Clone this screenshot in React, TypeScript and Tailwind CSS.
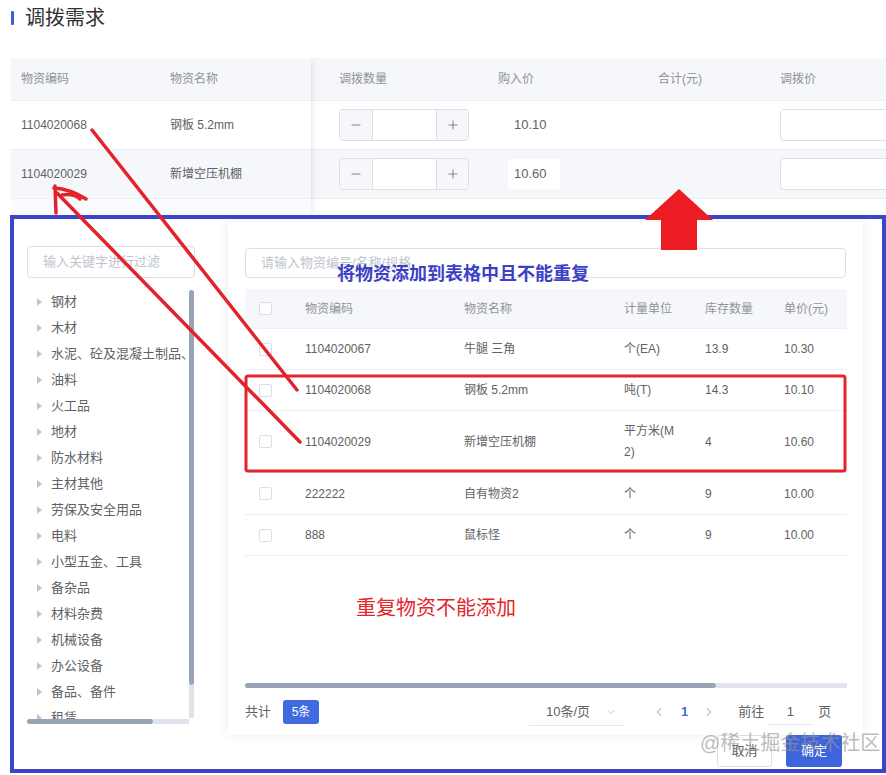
import React from 'react';
import { ChevronDown, ChevronLeft, ChevronRight, Minus, Plus } from 'lucide-react';

const tree = [
  '钢材',
  '木材',
  '水泥、砼及混凝土制品、其他',
  '油料',
  '火工品',
  '地材',
  '防水材料',
  '主材其他',
  '劳保及安全用品',
  '电料',
  '小型五金、工具',
  '备杂品',
  '材料杂费',
  '机械设备',
  '办公设备',
  '备品、备件',
  '租赁',
];

type Row = { code: string; name: string; unit: React.ReactNode; stock: string; price: string; h: string };

const rows: Row[] = [
  { code: '1104020067', name: '牛腿 三角', unit: '个(EA)', stock: '13.9', price: '10.30', h: 'h-[41px]' },
  { code: '1104020068', name: '钢板 5.2mm', unit: '吨(T)', stock: '14.3', price: '10.10', h: 'h-[41px]' },
  {
    code: '1104020029',
    name: '新增空压机棚',
    unit: (
      <span className="leading-[21px]">
        平方米(M
        <br />
        2)
      </span>
    ),
    stock: '4',
    price: '10.60',
    h: 'h-[62px]',
  },
  { code: '222222', name: '自有物资2', unit: '个', stock: '9', price: '10.00', h: 'h-[42px]' },
  { code: '888', name: '鼠标怪', unit: '个', stock: '9', price: '10.00', h: 'h-[41px]' },
];

function InputNumber() {
  return (
    <div className="flex h-[32px] w-[130px] overflow-hidden rounded-[4px] border border-[#dcdfe6] bg-white">
      <div className="flex w-[33px] items-center justify-center border-r border-[#dcdfe6] bg-[#f5f7fa] text-[#606266]">
        <Minus size={14} strokeWidth={1.3} />
      </div>
      <div className="flex-1" />
      <div className="flex w-[32px] items-center justify-center border-l border-[#dcdfe6] bg-[#f5f7fa] text-[#606266]">
        <Plus size={14} strokeWidth={1.3} />
      </div>
    </div>
  );
}

function Checkbox() {
  return <div className="h-[13px] w-[13px] rounded-[2px] border border-[#dcdfe6] bg-white" />;
}

export default function App() {
  return (
    <div className="relative h-[775px] w-[886px] overflow-hidden bg-white font-['Liberation_Sans','Noto_Sans_CJK_SC',sans-serif] text-[12px] text-[#606266]">
      {/* Title */}
      <div className="flex h-[58px] items-start pl-[11px] pt-[4px]">
        <div className="flex h-[28px] items-center">
          <div className="h-[14px] w-[3px] rounded-[1px] bg-[#3a62d7]" />
          <div className="ml-[11px] text-[20px] leading-[28px] text-[#303133]">调拨需求</div>
        </div>
      </div>

      {/* Top table */}
      <div className="ml-[11px] flex h-[157px] w-[875px] overflow-hidden">
        <div className="relative z-10 w-[300px] shrink-0 bg-white shadow-[3px_0_6px_-2px_rgba(0,0,0,0.1)]">
          <div className="flex h-[43px] items-center border-b border-[#ebeef5] bg-[#f5f7fa] text-[#909399]">
            <div className="w-[149px] pl-[10px]">物资编码</div>
            <div className="w-[151px] pl-[10px]">物资名称</div>
          </div>
          <div className="flex h-[49px] items-center border-b border-[#ebeef5] bg-white">
            <div className="w-[149px] pl-[10px]">1104020068</div>
            <div className="w-[151px] pl-[10px]">钢板 5.2mm</div>
          </div>
          <div className="flex h-[49px] items-center border-b border-[#ebeef5] bg-[#f5f7fa]">
            <div className="w-[149px] pl-[10px]">1104020029</div>
            <div className="w-[151px] pl-[10px]">新增空压机棚</div>
          </div>
          <div className="h-[16px] bg-[#fafbfc]" />
        </div>
        <div className="flex-1 overflow-hidden">
          <div className="flex h-[43px] items-center border-b border-[#ebeef5] bg-[#f5f7fa] text-[#909399]">
            <div className="w-[177px] shrink-0 pl-[28px]">调拨数量</div>
            <div className="w-[160px] shrink-0 pl-[10px]">购入价</div>
            <div className="w-[122px] shrink-0 pl-[10px]">合计(元)</div>
            <div className="flex-1 pl-[10px]">调拨价</div>
          </div>
          {[0, 1].map((i) => (
            <div
              key={i}
              className={`flex h-[49px] items-center border-b border-[#ebeef5] ${i === 1 ? 'bg-[#f5f7fa]' : 'bg-white'}`}
            >
              <div className="w-[177px] shrink-0 pl-[28px]">
                <InputNumber />
              </div>
              <div className="w-[160px] shrink-0 pl-[20px]">
                <div className="flex h-[30px] w-[52px] items-center bg-white px-[6px] text-[13px]">
                  {i === 0 ? '10.10' : '10.60'}
                </div>
              </div>
              <div className="w-[122px] shrink-0" />
              <div className="flex-1 pl-[10px]">
                <div className="h-[32px] w-[140px] rounded-[4px] border border-[#dcdfe6] bg-white" />
              </div>
            </div>
          ))}
        </div>
      </div>

      {/* Dialog (outlined) */}
      <div className="ml-[10px] h-[558px] w-[876px] border-[4px] border-[#3c44c9]">
        <div className="flex h-[516px] items-start pt-[3px]">
          {/* Left panel */}
          <div className="ml-[13px] mt-[24px] w-[168px] shrink-0">
            <div className="flex h-[32px] items-center rounded-[4px] border border-[#dcdfe6] pl-[15px] text-[13px] text-[#c0c4cc]">
              输入关键字进行过滤
            </div>
            <div className="mt-[11px] flex flex-col">
              <div className="flex h-[430px]">
                <div className="w-[162px] overflow-hidden">
                  {tree.map((t) => (
                    <div key={t} className="flex h-[26px] items-center whitespace-nowrap pl-[10px] text-[13px] text-[#606266]">
                      <span className="h-0 w-0 shrink-0 border-y-[4px] border-l-[5px] border-y-transparent border-l-[#c0c4cc]" />
                      <span className="ml-[9px]">{t}</span>
                    </div>
                  ))}
                </div>
                <div className="flex w-[5px] flex-col pt-[1px]">
                  <div className="h-[395px] rounded-[3px] bg-[#98a4b6]" />
                  <div className="h-[33px] bg-[#dfe4ec]" />
                </div>
              </div>
              <div className="flex h-[5px]">
                <div className="w-[126px] rounded-[3px] bg-[#98a4b6]" />
                <div className="w-[36px] bg-[#dfe4ec]" />
              </div>
            </div>
          </div>

          {/* Right card */}
          <div className="ml-[33px] flex h-[513px] w-[635px] shrink-0 flex-col bg-white px-[17px] pt-[26px] shadow-[0_0_10px_rgba(0,0,0,0.08)]">
            <div className="flex h-[30px] items-center rounded-[4px] border border-[#dcdfe6] pl-[15px] text-[13px] text-[#c0c4cc]">
              请输入物资编号/名称/规格
            </div>
            <div className="mt-[11px] w-[602px]">
              <div className="flex h-[40px] items-center border-b border-[#ebeef5] bg-[#f5f7fa] text-[#909399]">
                <div className="w-[50px] shrink-0 pl-[14px]">
                  <Checkbox />
                </div>
                <div className="w-[159px] shrink-0 pl-[10px]">物资编码</div>
                <div className="w-[160px] shrink-0 pl-[10px]">物资名称</div>
                <div className="w-[81px] shrink-0 pl-[10px]">计量单位</div>
                <div className="w-[79px] shrink-0 pl-[10px]">库存数量</div>
                <div className="w-[73px] shrink-0 pl-[10px]">单价(元)</div>
              </div>
              {rows.map((r) => (
                <div key={r.code} className={`flex ${r.h} items-center border-b border-[#ebeef5]`}>
                  <div className="w-[50px] shrink-0 pl-[14px]">
                    <Checkbox />
                  </div>
                  <div className="w-[159px] shrink-0 pl-[10px]">{r.code}</div>
                  <div className="w-[160px] shrink-0 pl-[10px]">{r.name}</div>
                  <div className="w-[81px] shrink-0 pl-[10px]">{r.unit}</div>
                  <div className="w-[79px] shrink-0 pl-[10px]">{r.stock}</div>
                  <div className="w-[73px] shrink-0 pl-[10px]">{r.price}</div>
                </div>
              ))}
            </div>
            <div className="flex-1" />
            <div className="flex h-[5px] w-[602px]">
              <div className="w-[471px] rounded-[3px] bg-[#98a4b6]" />
              <div className="flex-1 bg-[#dfe4ec]" />
            </div>
            <div className="mt-[10px] flex h-[28px] items-center text-[13px]">
              <span className="text-[#606266]">共计</span>
              <span className="ml-[12px] flex h-[24px] w-[36px] items-center justify-center rounded-[3px] bg-[#3f6ae0] text-[12px] text-white">
                5条
              </span>
              <div className="ml-[210px] flex h-[28px] w-[96px] items-center justify-between border-b border-[#e4e7ed] pl-[17px] pr-[8px] text-[#606266]">
                <span>10条/页</span>
                <ChevronDown size={12} className="text-[#c0c4cc]" />
              </div>
              <ChevronLeft size={14} className="ml-[27px] text-[#c0c4cc]" />
              <span className="ml-[15px] font-bold text-[#3f6ae0]">1</span>
              <ChevronRight size={14} className="ml-[14px] text-[#c0c4cc]" />
              <span className="ml-[22px] text-[#606266]">前往</span>
              <div className="ml-[3px] flex h-[26px] w-[46px] items-center justify-center border-b border-[#e4e7ed] text-[#606266]">
                1
              </div>
              <span className="ml-[5px] text-[#606266]">页</span>
            </div>
            <div className="h-[9px]" />
          </div>
        </div>
        {/* Footer */}
        <div className="flex h-[32px] items-center justify-end pr-[40px]">
          <div className="flex h-[32px] w-[55px] items-center justify-center rounded-[3px] border border-[#dcdfe6] bg-white text-[13px] text-[#606266]">
            取消
          </div>
          <div className="ml-[14px] flex h-[32px] w-[56px] items-center justify-center rounded-[3px] bg-[#3e64db] text-[13px] text-white">
            确定
          </div>
        </div>
      </div>

      {/* Watermark */}
      <div className="pointer-events-none absolute left-[700px] top-[729px] z-20 text-[20px] leading-[28px] text-[rgba(150,150,150,0.65)]">
        @稀土掘金技术社区
      </div>

      {/* Annotations */}
      <svg className="pointer-events-none absolute left-0 top-0 z-20" width="886" height="775" viewBox="0 0 886 775">
        <g stroke="#e3222b" strokeWidth="3.5" strokeLinecap="round" fill="none">
          <path d="M92 130 L297 390" />
          <path d="M57 193 L300 442" />
          <path d="M56 213 L55 186" />
          <path d="M54 188 Q70 189 86 199" />
          <path d="M62 195 Q74 193 80 199" />
        </g>
        <rect x="246" y="376" width="599" height="95" rx="2" fill="none" stroke="#e1262c" strokeWidth="3" />
        <polygon points="679,189 645,220 661,220 661,250 697,250 697,220 713,220" fill="#ec1c24" />
      </svg>
      <div className="pointer-events-none absolute left-[337px] top-[262px] z-20 text-[18px] font-bold leading-[24px] text-[#3b40c6]">
        将物资添加到表格中且不能重复
      </div>
      <div className="pointer-events-none absolute left-[356px] top-[594px] z-20 text-[20px] leading-[28px] text-[#e4252b]">
        重复物资不能添加
      </div>
    </div>
  );
}
